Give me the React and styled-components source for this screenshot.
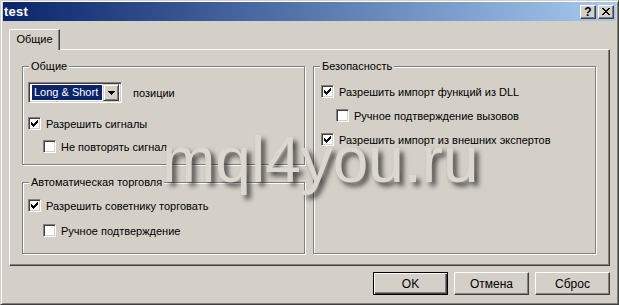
import React from "react";
import styled, { createGlobalStyle } from "styled-components";

const face = "#d4d0c8";

const GlobalStyle = createGlobalStyle`
  html, body {
    margin: 0;
    padding: 0;
    background: ${face};
  }
  * {
    box-sizing: border-box;
  }
`;

const Window = styled.div`
  position: relative;
  width: 619px;
  height: 305px;
  padding: 1px 2px 2px 2px;
  background: ${face};
  border: 1px solid;
  border-color: ${face} #404040 #404040 ${face};
  box-shadow: inset 1px 1px #fff, inset -1px -1px #808080;
  font-family: "Liberation Sans", Arial, sans-serif;
  font-size: 11px;
  color: #000;
`;

const TitleBar = styled.div`
  display: flex;
  align-items: center;
  height: 19px;
  padding: 0 2px 0 1px;
  background: linear-gradient(to right, #0a246a, #a6caf0);
`;

const TitleText = styled.div`
  flex: 1;
  color: #fff;
  font-weight: bold;
  font-size: 13px;
  letter-spacing: 0.2px;
`;

const TitleButtons = styled.div`
  display: flex;
  gap: 2px;
`;

const CaptionButton = styled.div`
  width: 16px;
  height: 14px;
  display: flex;
  align-items: center;
  justify-content: center;
  background: ${face};
  border: 1px solid;
  border-color: #fff #404040 #404040 #fff;
  box-shadow: inset -1px -1px #808080;
  font-weight: bold;
  font-size: 12px;
  line-height: 1;
`;

const Body = styled.div`
  padding: 8px 6px 0 6px;
`;

const TabStrip = styled.div`
  display: flex;
  height: 20px;
`;

const Tab = styled.div`
  position: relative;
  z-index: 1;
  width: 51px;
  height: 21px;
  display: flex;
  align-items: center;
  justify-content: center;
  padding-bottom: 2px;
  background: ${face};
  border-top: 1px solid #fff;
  border-left: 1px solid #fff;
  border-right: 1px solid #404040;
  border-top-left-radius: 2px;
  box-shadow: inset -1px 0 #808080;
`;

const Panel = styled.div`
  height: 217px;
  display: grid;
  grid-template-columns: 283px 283px;
  column-gap: 8px;
  padding: 16px 12px 0 12px;
  border: 1px solid;
  border-color: #fff #404040 #404040 #fff;
  box-shadow: inset -1px -1px #808080;
`;

const Column = styled.div`
  display: flex;
  flex-direction: column;
  gap: 17px;
`;

const Group = styled.div`
  position: relative;
  height: ${(p) => p.$height}px;
  padding-left: ${(p) => p.$inset}px;
  border: 1px solid #808080;
  box-shadow: inset 1px 1px #fff, 1px 1px #fff;
`;

const Legend = styled.span`
  position: absolute;
  top: -7px;
  left: 6px;
  padding: 0 2px;
  background: ${face};
  line-height: 13px;
`;

const ComboRow = styled.div`
  display: flex;
  align-items: center;
  gap: 11px;
  margin-top: 15px;
`;

const Combo = styled.div`
  display: flex;
  align-items: center;
  width: 94px;
  height: 21px;
  padding: 2px;
  background: #fff;
  border: 1px solid;
  border-color: #808080 #fff #fff #808080;
  box-shadow: inset 1px 1px #404040, inset -1px -1px ${face};
`;

const ComboValue = styled.div`
  flex: 1;
  min-width: 0;
  height: 15px;
  margin: 0 1px 0 1px;
  padding-left: 2px;
  line-height: 15px;
  background: #0a246a;
  color: #fff;
  font-size: 11px;
  white-space: nowrap;
  overflow: hidden;
`;

const ComboButton = styled.div`
  flex: none;
  width: 16px;
  height: 17px;
  display: flex;
  align-items: center;
  justify-content: center;
  background: ${face};
  border: 1px solid;
  border-color: ${face} #404040 #404040 ${face};
  box-shadow: inset 1px 1px #fff, inset -1px -1px #808080;
`;

const CheckRow = styled.div`
  display: flex;
  align-items: center;
  gap: 5px;
  height: 17px;
  margin-top: ${(p) => p.$top}px;
  padding-left: ${(p) => (p.$child ? 15 : 0)}px;
`;

const Box = styled.div`
  width: 13px;
  height: 13px;
  display: flex;
  align-items: center;
  justify-content: center;
  background: #fff;
  border: 1px solid;
  border-color: #808080 #fff #fff #808080;
  box-shadow: inset 1px 1px #404040, inset -1px -1px ${face};
`;

const Label = styled.span`
  white-space: nowrap;
  font-size: 11px;
`;

const Footer = styled.div`
  display: flex;
  justify-content: flex-end;
  gap: 6px;
  margin-top: 6px;
`;

const Button = styled.div`
  width: 75px;
  height: 23px;
  display: flex;
  align-items: center;
  justify-content: center;
  background: ${face};
  border: 1px solid;
  border-color: ${(p) => (p.$default ? "#000 #000 #000 #000" : "#fff #404040 #404040 #fff")};
  box-shadow: ${(p) =>
    p.$default
      ? "inset 1px 1px #fff, inset -1px -1px #404040, inset -2px -2px #808080"
      : "inset -1px -1px #808080"};
  font-size: 12px;
`;

const Watermark = styled.div`
  position: absolute;
  left: 161px;
  top: 127px;
  font-family: "Liberation Sans", Arial, sans-serif;
  font-size: 64px;
  line-height: 64px;
  color: #dcd8d0;
  text-shadow: 4px 4px 5px rgba(0, 0, 0, 0.65);
  pointer-events: none;
`;

const checkPixels = [
  [0, 2], [1, 3], [2, 4], [3, 3], [4, 2], [5, 1], [6, 0],
];

const CheckMark = () => (
  <svg width="7" height="7" viewBox="0 0 7 7" shapeRendering="crispEdges">
    {checkPixels.map(([x, y]) => (
      <rect key={x} x={x} y={y} width="1" height="3" fill="#000" />
    ))}
  </svg>
);

const closePixels = [
  [0, 0], [1, 0], [6, 0], [7, 0],
  [1, 1], [2, 1], [5, 1], [6, 1],
  [2, 2], [3, 2], [4, 2], [5, 2],
  [3, 3], [4, 3],
  [2, 4], [3, 4], [4, 4], [5, 4],
  [1, 5], [2, 5], [5, 5], [6, 5],
  [0, 6], [1, 6], [6, 6], [7, 6],
];

const CloseIcon = () => (
  <svg width="8" height="7" viewBox="0 0 8 7" shapeRendering="crispEdges">
    {closePixels.map(([x, y]) => (
      <rect key={x + "-" + y} x={x} y={y} width="1" height="1" fill="#000" />
    ))}
  </svg>
);

const ArrowDown = () => (
  <svg width="7" height="4" viewBox="0 0 7 4" shapeRendering="crispEdges">
    <path d="M0 0h7v1h-1v1h-1v1h-1v1h-1v-1h-1v-1h-1v-1h-1z" fill="#000" />
  </svg>
);

const Check = ({ checked, child, top, children }) => (
  <CheckRow $child={child} $top={top}>
    <Box>{checked && <CheckMark />}</Box>
    <Label>{children}</Label>
  </CheckRow>
);

const App = () => {
  return (
    <>
      <GlobalStyle />
      <Window>
        <TitleBar>
          <TitleText>test</TitleText>
          <TitleButtons>
            <CaptionButton>?</CaptionButton>
            <CaptionButton>
              <CloseIcon />
            </CaptionButton>
          </TitleButtons>
        </TitleBar>
        <Body>
          <TabStrip>
            <Tab>Общие</Tab>
          </TabStrip>
          <Panel>
            <Column>
              <Group $height={99} $inset={5}>
                <Legend>Общие</Legend>
                <ComboRow>
                  <Combo>
                    <ComboValue>Long &amp; Short</ComboValue>
                    <ComboButton>
                      <ArrowDown />
                    </ComboButton>
                  </Combo>
                  <Label>позиции</Label>
                </ComboRow>
                <Check checked top={12}>Разрешить сигналы</Check>
                <Check child top={6}>Не повторять сигнал</Check>
              </Group>
              <Group $height={72} $inset={5}>
                <Legend>Автоматическая торговля</Legend>
                <Check checked top={14}>Разрешить советнику торговать</Check>
                <Check child top={8}>Ручное подтверждение</Check>
              </Group>
            </Column>
            <Group $height={188} $inset={7}>
              <Legend>Безопасность</Legend>
              <Check checked top={16}>Разрешить импорт функций из DLL</Check>
              <Check child top={7}>Ручное подтверждение вызовов</Check>
              <Check checked top={7}>Разрешить импорт из внешних экспертов</Check>
            </Group>
          </Panel>
          <Footer>
            <Button $default>OK</Button>
            <Button>Отмена</Button>
            <Button>Сброс</Button>
          </Footer>
        </Body>
        <Watermark>mql4you.ru</Watermark>
      </Window>
    </>
  );
};

export default App;
